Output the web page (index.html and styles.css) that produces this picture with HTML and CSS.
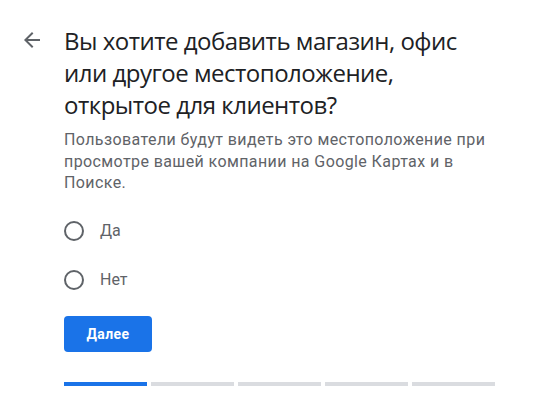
FILE: index.html
```html
<!DOCTYPE html>
<html lang="ru">
<head>
<meta charset="utf-8">
<link rel="stylesheet" href="styles.css">
</head>
<body>
<div class="page">
  <div class="back">
    <svg width="24" height="24" viewBox="0 0 24 24"><path fill="#5f6368" d="M20 11H7.83l5.59-5.59L12 4l-8 8 8 8 1.41-1.41L7.83 13H20v-2z"/></svg>
  </div>
  <div class="content">
    <h1 class="title">Вы хотите добавить магазин, офис или другое местоположение, открытое для клиентов?</h1>
    <p class="desc">Пользователи будут видеть это местоположение при просмотре вашей компании на Google Картах и в Поиске.</p>
    <div class="options">
      <label class="option"><span class="radio"></span><span class="label">Да</span></label>
      <label class="option"><span class="radio"></span><span class="label">Нет</span></label>
    </div>
    <button class="next">Далее</button>
    <div class="progress">
      <span class="seg active"></span>
      <span class="seg"></span>
      <span class="seg"></span>
      <span class="seg"></span>
      <span class="seg"></span>
    </div>
  </div>
</div>
</body>
</html>
```

FILE: styles.css
```css
html, body {
  margin: 0;
  padding: 0;
  background: #fff;
}
.page {
  display: flex;
  padding: 25px 0 0 20px;
  width: 475px;
}
.back {
  width: 24px;
  height: 24px;
  margin-top: 3px;
  flex: none;
  display: flex;
}
.content {
  margin-left: 20px;
  width: 431px;
}
.title {
  margin: 0;
  font-family: "Open Sans", sans-serif;
  font-weight: 400;
  font-size: 24px;
  letter-spacing: -0.5px;
  line-height: 32px;
  color: #202124;
}
.desc {
  margin: 8px 0 0;
  font-family: Roboto, sans-serif;
  font-size: 16px;
  letter-spacing: 0.4px;
  line-height: 21.5px;
  color: #5f6368;
}
.options {
  margin-top: 13px;
  display: flex;
  flex-direction: column;
  gap: 1px;
}
.option {
  height: 48px;
  display: flex;
  align-items: center;
}
.radio {
  width: 16px;
  height: 16px;
  border: 2px solid #5f6368;
  border-radius: 50%;
  margin-left: 0;
  flex: none;
}
.label {
  margin-left: 16px;
  font-family: Roboto, sans-serif;
  font-size: 16px;
  color: #5f6368;
}
.next {
  display: block;
  margin-top: 12px;
  width: 88px;
  height: 36px;
  border: none;
  border-radius: 4px;
  background: #1a73e8;
  color: #fff;
  font-family: Roboto, sans-serif;
  font-weight: 700;
  font-size: 14px;
  letter-spacing: 0.4px;
  padding: 0;
}
.progress {
  margin-top: 30px;
  display: flex;
  gap: 4px;
}
.seg {
  flex: 1;
  height: 4px;
  background: #dadce0;
}
.seg.active {
  background: #1a73e8;
}
```
